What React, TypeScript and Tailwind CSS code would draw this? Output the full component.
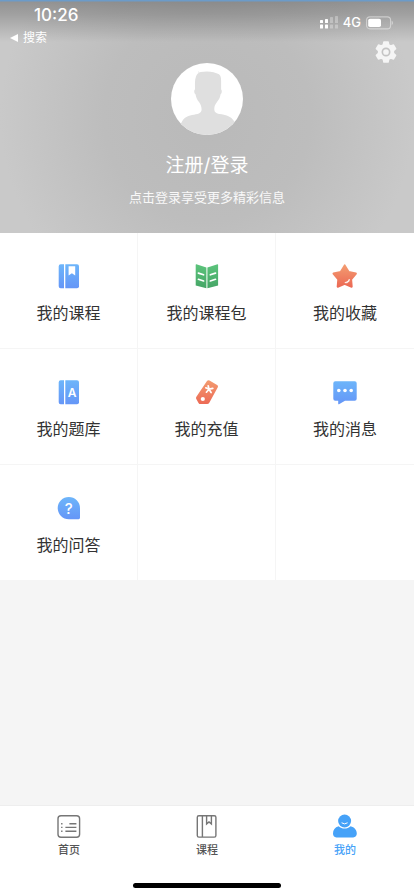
import type { ReactNode } from 'react';

function Gradients() {
  return (
    <svg className="absolute h-0 w-0" aria-hidden="true">
      <defs>
        <linearGradient id="blue" x1="0" y1="0" x2="0" y2="1">
          <stop offset="0" stopColor="#6db5fa" />
          <stop offset="1" stopColor="#6596f7" />
        </linearGradient>
        <linearGradient id="green" x1="0" y1="0" x2="0" y2="1">
          <stop offset="0" stopColor="#5cc47c" />
          <stop offset="1" stopColor="#45a566" />
        </linearGradient>
        <linearGradient id="orange" x1="0" y1="0" x2="0" y2="1">
          <stop offset="0" stopColor="#f39b70" />
          <stop offset="1" stopColor="#ec6a55" />
        </linearGradient>
      </defs>
    </svg>
  );
}

function Icon({ children }: { children: ReactNode }) {
  return (
    <svg viewBox="0 0 28 28" className="h-7 w-7" aria-hidden="true">
      {children}
    </svg>
  );
}

function BookShape() {
  return (
    <>
      <path d="M5.7 1.3H9v24H5.7a2 2 0 0 1-2-2v-20a2 2 0 0 1 2-2z" fill="url(#blue)" />
      <path d="M10.3 1.3H22a2 2 0 0 1 2 2v20a2 2 0 0 1-2 2H10.3z" fill="url(#blue)" />
    </>
  );
}

function CourseIcon() {
  return (
    <Icon>
      <BookShape />
      <path d="M13.6 3.3h6.6v9.2l-3.3-2.2-3.3 2.2z" fill="#fff" />
    </Icon>
  );
}

function PackageIcon() {
  return (
    <Icon>
      <path d="M3.4 1.2l10 3.3v20.8L2.7 22.6V1.8c0-.5.3-.7.7-.6z" fill="url(#green)" />
      <path d="M24.5 1.2l-10.1 3.3v20.8l10.7-2.7V1.8c0-.5-.3-.7-.6-.6z" fill="url(#green)" />
      <path
        d="M5.4 10.1l5.2 1.7M5.4 16.3l5.2 1.7M22.5 10.1l-5.2 1.7M22.5 16.3l-5.2 1.7"
        stroke="#fff"
        strokeWidth="1.7"
        strokeLinecap="round"
      />
    </Icon>
  );
}

function StarIcon() {
  return (
    <Icon>
      <path
        d="M13.7 2.4l4 6.5 7.2 1.6-4.8 5.9.6 7.3-7-2.8-7 2.8.6-7.3-4.8-5.9 7.2-1.6z"
        fill="url(#orange)"
        stroke="url(#orange)"
        strokeWidth="2"
        strokeLinejoin="round"
      />
      <path d="M13.8 19.6c2.2-.5 3.7-1.6 4.5-3.500.6 2.500-1.800 4.400-4.500 3.500z" fill="#fff" stroke="#fff" strokeWidth="0.6" />
    </Icon>
  );
}

function QuestionBankIcon() {
  return (
    <Icon>
      <BookShape />
      <text x="17" y="17.8" textAnchor="middle" fill="#fff" className="font-[Inter] text-[12px] font-semibold">
        A
      </text>
    </Icon>
  );
}

function TagIcon() {
  return (
    <Icon>
      <path
        d="M14 1.9q1.1-1.2 2.5-.4l7.6 4.4q1.5.9.7 2.4l-8.5 15.4q-.7 1.4-2.2 1.4H7.6q-1.4 0-2.1-1.2l-2.2-3.8q-.7-1.1.1-2.3z"
        fill="url(#orange)"
      />
      <circle cx="9.8" cy="20" r="2.1" fill="#fff" />
      <path
        d="M16 10.2L15.2 6.8M16 10.2l3.8-.8M16 10.2l2.1 3.3M16 10.2l-2.6 3M16 10.2l-3.2-1.4"
        stroke="#fff"
        strokeWidth="1.7"
        strokeLinecap="round"
      />
    </Icon>
  );
}

function MessageIcon() {
  return (
    <Icon>
      <path
        d="M4.3 2.3h19.4a2 2 0 0 1 2 2v15.5a2 2 0 0 1-2 2H14l-5.6 3.3c-.8.4-1.2.1-1.2-.7v-2.6H4.3a2 2 0 0 1-2-2V4.3a2 2 0 0 1 2-2z"
        fill="url(#blue)"
      />
      <circle cx="7.8" cy="11.5" r="1.8" fill="#fff" />
      <circle cx="14" cy="11.5" r="1.8" fill="#fff" />
      <circle cx="20.2" cy="11.5" r="1.8" fill="#fff" />
    </Icon>
  );
}

function AnswerIcon() {
  return (
    <Icon>
      <path d="M13.8 2A11.2 11.2 0 0 1 25 13.2v9.6q0 1.4-1.4 1.4h-9.8a11.1 11.1 0 0 1 0-22.2z" fill="url(#blue)" />
      <text x="13.8" y="18.6" textAnchor="middle" fill="#fff" className="font-[Inter] text-[15px] font-medium">
        ?
      </text>
    </Icon>
  );
}

function HomeTabIcon() {
  return (
    <svg viewBox="0 0 24 24" className="h-6 w-6" fill="none" stroke="#767676" strokeWidth="1.4" aria-hidden="true">
      <rect x="1" y="1.7" width="21.6" height="21.6" rx="3" />
      <path d="M12.4 9.7h7M8.4 13.4h11M8.4 17.2h11M4.1 9.7h1.4M4.1 13.4h1.4M4.1 17.2h1.4" />
    </svg>
  );
}

function CourseTabIcon() {
  return (
    <svg viewBox="0 0 24 24" className="h-6 w-6" fill="none" stroke="#767676" strokeWidth="1.4" aria-hidden="true">
      <rect x="2.3" y="1.7" width="18.6" height="21.4" rx="1.6" />
      <path d="M7.4 1.7v21.4M11.6 1.7v8.2l2.4-2 2.4 2V1.7" />
    </svg>
  );
}

function MineTabIcon() {
  return (
    <svg viewBox="0 0 24 24" className="h-6 w-6" aria-hidden="true">
      <circle cx="11.6" cy="7" r="6.5" fill="#46a2f8" />
      <path d="M8.9 9q2.7 2 5.4 0" fill="none" stroke="#fff" strokeWidth="1" strokeLinecap="round" />
      <path
        d="M5.6 12.2c3.4 3.1 8.6 3.1 12 0 3.9 1 6.2 3.7 6.2 7.4 0 2.4-1.3 3.8-3.6 3.8H3.4C1.1 23.4 0 22 0 19.6c0-3.7 1.9-6.4 5.6-7.4z"
        fill="#46a2f8"
      />
    </svg>
  );
}

function SignalIcon() {
  return (
    <svg viewBox="0 0 18 14" className="h-[14px] w-[18px]" fill="#fff" aria-hidden="true">
      <rect x="0" y="4" width="3" height="3" rx="0.6" />
      <rect x="5" y="3" width="3" height="4" rx="0.6" />
      <rect x="10" y="1" width="3" height="6" rx="0.6" opacity="0.3" />
      <rect x="15" y="0" width="3" height="7" rx="0.6" opacity="0.3" />
      <rect x="0" y="8.5" width="3" height="4" rx="0.6" />
      <rect x="5" y="8.5" width="3" height="4" rx="0.6" />
      <rect x="10" y="8.5" width="3" height="4" rx="0.6" opacity="0.3" />
      <rect x="15" y="8.5" width="3" height="4" rx="0.6" opacity="0.3" />
    </svg>
  );
}

function BatteryIcon() {
  return (
    <svg viewBox="0 0 27 14" className="h-[14px] w-[27px]" aria-hidden="true">
      <rect x="0.6" y="0.9" width="24" height="12" rx="3.4" fill="none" stroke="#fff" strokeOpacity="0.45" strokeWidth="1.1" />
      <rect x="2.2" y="2.7" width="12.8" height="8.4" rx="1.8" fill="#fff" />
      <path d="M25.7 4.8q1.3.6 1.3 2.1t-1.3 2.1z" fill="#fff" fillOpacity="0.45" />
    </svg>
  );
}

function GearIcon() {
  return (
    <svg viewBox="0 0 24 24" className="h-[22px] w-[22px]" aria-hidden="true">
      <path
        d="M9.7 1h4.6l.7 3.200 2.1 1.200 3.100-1 2.300 4-2.400 2.200v2.800l2.400 2.200-2.300 4-3.100-1-2.100 1.200-.7 3.200H9.700L9 19.800l-2.100-1.200-3.100 1-2.300-4 2.400-2.200v-2.800L1.500 8.400l2.300-4 3.100 1L9 4.200z"
        fill="#f5f5f5"
        stroke="#f5f5f5"
        strokeWidth="1.6"
        strokeLinejoin="round"
      />
      <circle cx="12" cy="12" r="4" fill="none" stroke="#c4c4c4" strokeWidth="1.8" />
    </svg>
  );
}

function Avatar() {
  return (
    <svg viewBox="0 0 72 72" className="h-[72px] w-[72px] rounded-full bg-white" aria-hidden="true">
      <path
        d="M28 7.8c-.4 1.6.4 2.2 1.6 1.3 6-1.4 14-.6 18.4 2.2 1.8 1.4 2.1 3.5 2.1 6.7v8.6c1 .3 1 3.8-.5 4.7-.6 3.5-1.8 5.6-3.6 7.7-1.7 2.2-2.7 4.3-2.7 7 0 2.9 1.4 4.3 5 5 6.5 1 11.5 1.7 15.2 7.7L72 72H0l10.4-12.2c1.9-4.5 5.6-6.8 10.6-7.8 5.7-1 9.3-1.6 9.6-5.3 0-3-1-5.3-2.6-7.6-1.7-2.2-2.8-4.3-3.5-7.8-1.5-.9-1.6-4.4-.5-4.7 0-4.6-.4-9.6 1-13 .7-2 1.6-2.8 2.7-3.5-.3-.8-.3-1.6.3-2.3z"
        fill="#dfdfdf"
      />
    </svg>
  );
}

const MENU = [
  { label: '我的课程', icon: <CourseIcon /> },
  { label: '我的课程包', icon: <PackageIcon /> },
  { label: '我的收藏', icon: <StarIcon /> },
  { label: '我的题库', icon: <QuestionBankIcon /> },
  { label: '我的充值', icon: <TagIcon /> },
  { label: '我的消息', icon: <MessageIcon /> },
  { label: '我的问答', icon: <AnswerIcon /> },
];

const TABS = [
  { label: '首页', icon: <HomeTabIcon />, active: false },
  { label: '课程', icon: <CourseTabIcon />, active: false },
  { label: '我的', icon: <MineTabIcon />, active: true },
];

const CELL = 'h-[116px] border-b border-r border-[#f5f5f5] nth-[3n]:border-r-0';

export default function App() {
  return (
    <div className="flex min-h-screen flex-col bg-[#f5f5f5] font-[Inter,'Noto_Sans_CJK_SC',sans-serif]">
      <Gradients />

      {/* Profile header */}
      <header className="bg-[linear-gradient(to_bottom,#6c9bc8_0,#6c9bc8_1px,#00000044_2px,#00000034_14px,#00000000_42px),radial-gradient(ellipse_50%_90%_at_50%_50%,#b9b9b9,#bdbdbd_50%,#c9c9c9)] pb-[26px] text-white">
        <div className="flex h-[63px] justify-between">
          <div>
            <time className="block pl-[34px] text-[17px] leading-[30px] font-medium">10:26</time>
            <a href="#" className="flex h-4 items-center gap-[5px] pl-[10px] text-xs">
              <svg viewBox="0 0 8 8" className="h-2 w-2" fill="#fff" aria-hidden="true">
                <path d="M0 4l8-4v8z" />
              </svg>
              搜索
            </a>
          </div>
          <div className="flex flex-col items-end gap-[11px] pt-4">
            <div className="mr-[21px] flex h-[14px] items-center gap-[5px] text-[13px] font-medium">
              <SignalIcon />
              <span>4G</span>
              <BatteryIcon />
            </div>
            <button aria-label="设置" className="mr-[17px]">
              <GearIcon />
            </button>
          </div>
        </div>

        <button className="mx-auto flex flex-col items-center">
          <Avatar />
          <span className="mt-4 text-[19px] leading-[30px]">注册/登录</span>
          <span className="mt-[6px] text-[13px] leading-5 text-white/90">点击登录享受更多精彩信息</span>
        </button>
      </header>

      {/* Menu grid */}
      <main className="flex-1">
        <div className="grid grid-cols-3 bg-white text-[#333]">
          {MENU.map((item) => (
            <button key={item.label} className={`${CELL} flex flex-col items-center pt-[30px]`}>
              {item.icon}
              <span className="mt-2 text-base leading-7">{item.label}</span>
            </button>
          ))}
          <div className={CELL} />
          <div className={CELL} />
        </div>
      </main>

      {/* Tab bar */}
      <footer className="border-t border-[#eeeeee] bg-white pb-2">
        <nav className="grid grid-cols-3">
          {TABS.map((tab) => (
            <a
              key={tab.label}
              href="#"
              aria-current={tab.active ? 'page' : undefined}
              className={`flex flex-col items-center gap-1 pt-2 text-[11px] leading-4 font-medium ${
                tab.active ? 'text-[#46a2f8]' : 'text-[#555]'
              }`}
            >
              {tab.icon}
              {tab.label}
            </a>
          ))}
        </nav>
        <div className="mx-auto mt-[25px] h-[5px] w-[148px] rounded-full bg-black" />
      </footer>
    </div>
  );
}
